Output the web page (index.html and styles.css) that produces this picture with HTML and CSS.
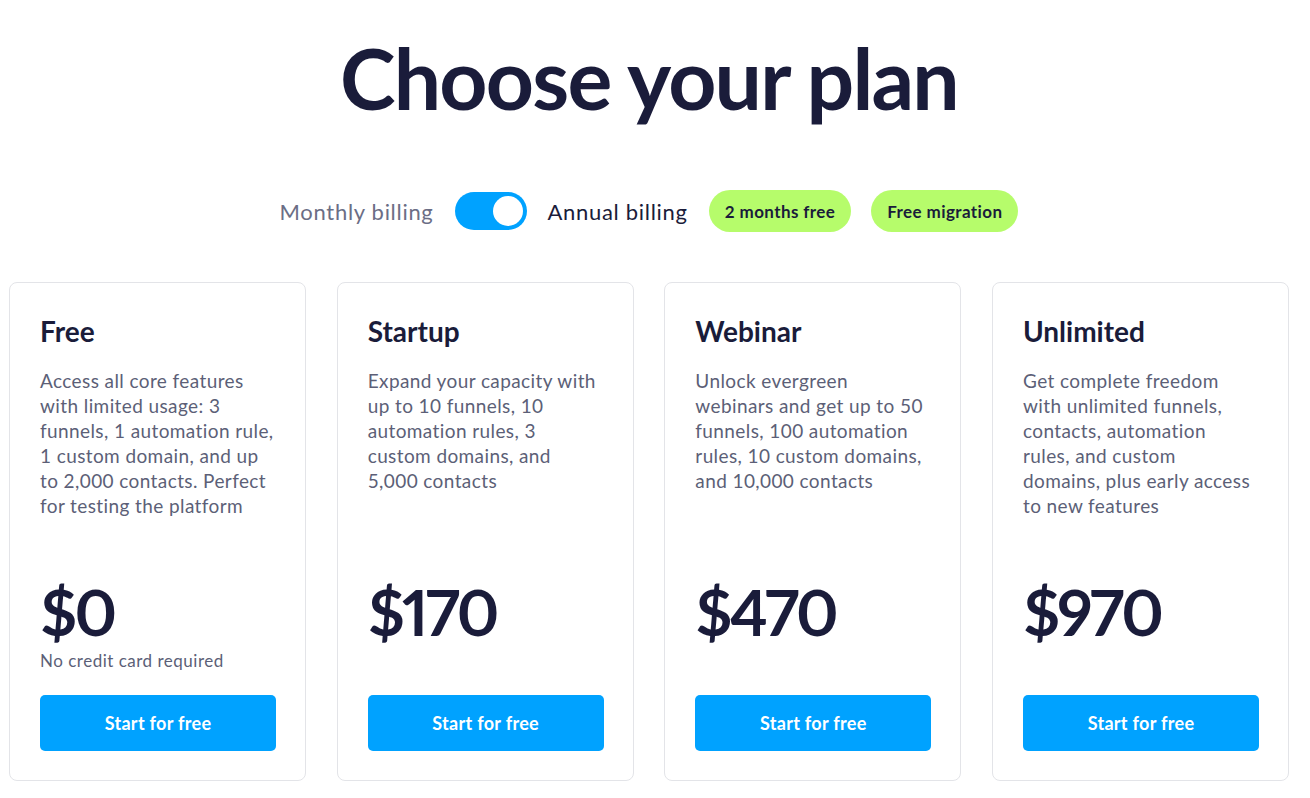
FILE: index.html
```html
<!DOCTYPE html>
<html lang="en">
<head>
    <meta charset="UTF-8">
    <meta name="viewport" content="width=device-width, initial-scale=1.0">
    <title>Choose your plan</title>
    <link rel="stylesheet" href="styles.css">
</head>
<body>
    <div class="container">
        <h1 class="title">Choose your plan</h1>

        <div class="billing">
            <span class="billing-label">Monthly billing</span>
            <button class="toggle" aria-label="Toggle billing"><span class="toggle-knob"></span></button>
            <span class="billing-label active">Annual billing</span>
            <span class="badge">2 months free</span>
            <span class="badge">Free migration</span>
        </div>

        <div class="plans">
            <div class="plan">
                <h2 class="plan-name">Free</h2>
                <p class="plan-desc">Access all core features with limited usage: 3 funnels, 1 automation rule, 1 custom domain, and up to 2,000 contacts. Perfect for testing the platform</p>
                <div class="plan-price">
                    <div class="price">$0</div>
                    <div class="price-note">No credit card required</div>
                </div>
                <button class="btn">Start for free</button>
            </div>

            <div class="plan">
                <h2 class="plan-name">Startup</h2>
                <p class="plan-desc">Expand your capacity with up to 10 funnels, 10 automation rules, 3 custom domains, and 5,000 contacts</p>
                <div class="plan-price">
                    <div class="price">$170</div>
                </div>
                <button class="btn">Start for free</button>
            </div>

            <div class="plan">
                <h2 class="plan-name">Webinar</h2>
                <p class="plan-desc">Unlock evergreen webinars and get up to 50 funnels, 100 automation rules, 10 custom domains, and 10,000 contacts</p>
                <div class="plan-price">
                    <div class="price">$470</div>
                </div>
                <button class="btn">Start for free</button>
            </div>

            <div class="plan">
                <h2 class="plan-name">Unlimited</h2>
                <p class="plan-desc">Get complete freedom with unlimited funnels, contacts, automation rules, and custom domains, plus early access to new features</p>
                <div class="plan-price">
                    <div class="price">$970</div>
                </div>
                <button class="btn">Start for free</button>
            </div>
        </div>
    </div>
</body>
</html>
```

FILE: styles.css
```css
* {
    margin: 0;
    padding: 0;
    box-sizing: border-box;
}

body {
    font-family: 'Lato', 'Noto Sans', sans-serif;
    background: #ffffff;
    color: #1a1c3a;
}

.container {
    width: 1280px;
    margin: 0 0 0 9px;
    padding-top: 36px;
}

.title {
    text-align: center;
    font-size: 84px;
    font-weight: 700;
    line-height: 84px;
    letter-spacing: -1.8px;
    color: #1a1c3a;
}

.billing {
    display: flex;
    align-items: center;
    justify-content: center;
    margin-top: 70px;
    height: 42px;
}

.billing-label {
    font-size: 22px;
    letter-spacing: 0.7px;
    color: #6b6e85;
}

.billing-label.active {
    color: #1a1c3a;
    margin-right: 21px;
}

.toggle {
    width: 72px;
    height: 38px;
    margin: 0 21px;
    border: none;
    border-radius: 19px;
    background: #00a2ff;
    position: relative;
    cursor: pointer;
}

.toggle-knob {
    position: absolute;
    top: 4px;
    right: 4px;
    width: 30px;
    height: 30px;
    border-radius: 50%;
    background: #ffffff;
}

.badge {
    display: flex;
    align-items: center;
    height: 42px;
    padding: 0 16px;
    border-radius: 21px;
    background: #b6fc6b;
    font-size: 17px;
    font-weight: 700;
    letter-spacing: 0.4px;
    color: #1a1c3a;
}

.badge + .badge {
    margin-left: 20px;
}

.plans {
    display: grid;
    grid-template-columns: repeat(4, 297px);
    justify-content: space-between;
    margin-top: 50px;
}

.plan {
    display: flex;
    flex-direction: column;
    height: 499px;
    padding: 30px 30px 29px 30px;
    border: 1px solid #e3e4e8;
    border-radius: 8px;
}

.plan-name {
    font-size: 28px;
    font-weight: 700;
    line-height: 36px;
    color: #1a1c3a;
}

.plan-desc {
    margin-top: 19px;
    font-size: 19px;
    line-height: 25px;
    letter-spacing: 0.4px;
    color: #5c5f77;
}

.plan-price {
    margin-top: auto;
    height: 100px;
}

.price {
    font-size: 64px;
    font-weight: 700;
    line-height: 64px;
    letter-spacing: -3px;
    font-variant-numeric: proportional-nums;
    color: #1a1c3a;
}

.price-note {
    margin-top: 6px;
    font-size: 17px;
    letter-spacing: 0.5px;
    color: #5c5f77;
}

.btn {
    margin-top: 15px;
    width: 236px;
    height: 56px;
    border: none;
    border-radius: 5px;
    background: #00a2ff;
    color: #ffffff;
    font-family: inherit;
    font-size: 18px;
    font-weight: 700;
    letter-spacing: 0.3px;
    cursor: pointer;
}
```
